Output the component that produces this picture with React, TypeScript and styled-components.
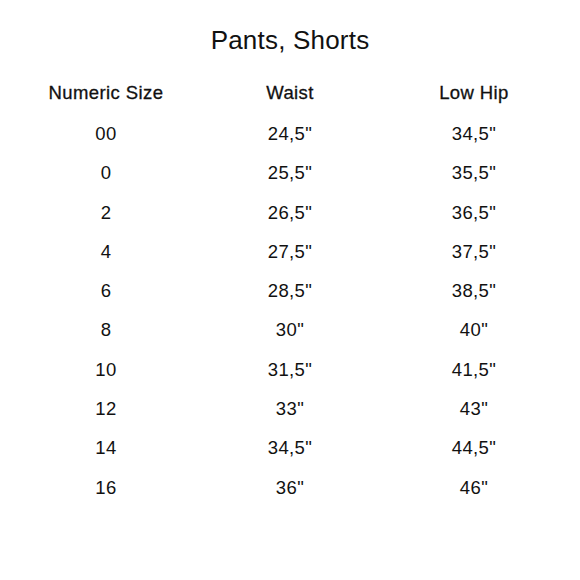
import React from "react";
import styled, { createGlobalStyle } from "styled-components";

const GlobalStyle = createGlobalStyle`
  html, body {
    margin: 0;
    padding: 0;
    background: #ffffff;
  }
  body {
    font-family: "Liberation Sans", Arial, sans-serif;
    color: #111111;
  }
`;

const Page = styled.div`
  width: 580px;
  height: 580px;
  padding: 24px 14px 0;
  box-sizing: border-box;
`;

const Title = styled.h1`
  margin: 0;
  text-align: center;
  font-size: 26px;
  font-weight: 400;
  letter-spacing: 0.2px;
  line-height: 32px;
`;

const Table = styled.div`
  margin-top: 17px;
  display: grid;
  grid-template-columns: repeat(3, 184px);
`;

const Cell = styled.div<{ $head?: boolean }>`
  height: 39.3px;
  display: flex;
  align-items: center;
  justify-content: center;
  font-size: 18.5px;
  font-weight: 400;
  letter-spacing: ${(p) => (p.$head ? "0.4px" : "0.4px")};
  -webkit-text-stroke: ${(p) => (p.$head ? "0.3px #111" : "0")};
  margin-bottom: ${(p) => (p.$head ? "2px" : "0")};
`;

const rows: [string, string, string][] = [
  ["00", '24,5"', '34,5"'],
  ["0", '25,5"', '35,5"'],
  ["2", '26,5"', '36,5"'],
  ["4", '27,5"', '37,5"'],
  ["6", '28,5"', '38,5"'],
  ["8", '30"', '40"'],
  ["10", '31,5"', '41,5"'],
  ["12", '33"', '43"'],
  ["14", '34,5"', '44,5"'],
  ["16", '36"', '46"'],
];

export default function App() {
  return (
    <Page>
      <GlobalStyle />
      <Title>Pants, Shorts</Title>
      <Table>
        <Cell $head>Numeric Size</Cell>
        <Cell $head>Waist</Cell>
        <Cell $head>Low Hip</Cell>
        {rows.map((r) =>
          r.map((v, i) => <Cell key={r[0] + i}>{v}</Cell>)
        )}
      </Table>
    </Page>
  );
}
